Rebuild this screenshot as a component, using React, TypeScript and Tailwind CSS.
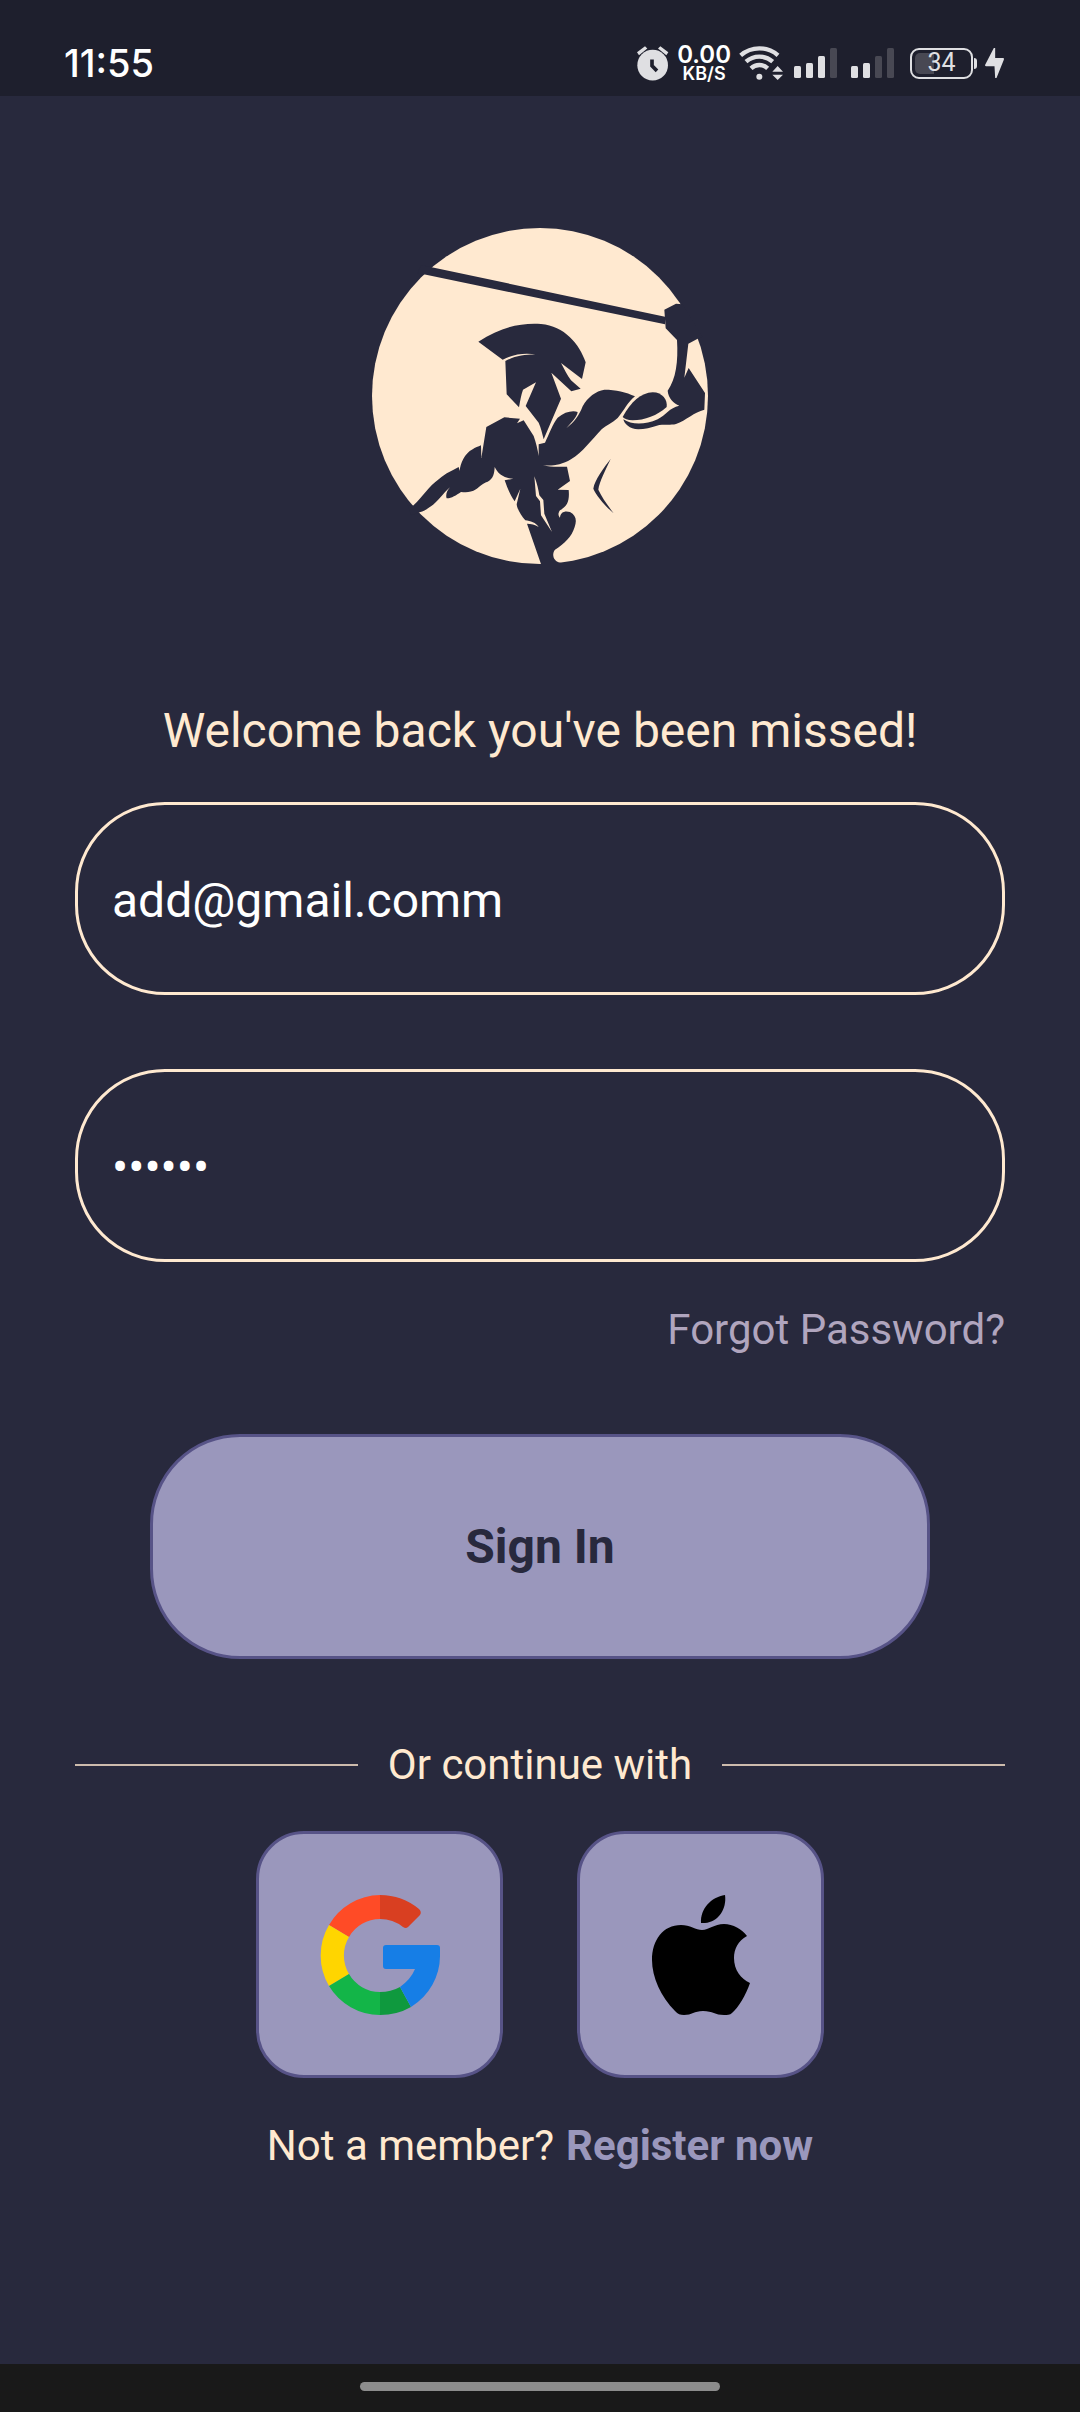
import React from "react";

function AlarmIcon() {
  return (
    <svg viewBox="0 0 96 104" className="h-[35px] w-[32px]" fill="#dfdfe2" aria-hidden="true">
      <path d="M0 18 24 0 31 7 6 27ZM94 18 70 0 63 7 88 27Z" />
      <circle cx="47" cy="57" r="46" />
      <path d="M45 40v19l15 15" fill="none" stroke="#1e1f2d" strokeWidth="11" />
    </svg>
  );
}

function WifiIcon() {
  return (
    <svg viewBox="0 0 132 102" className="h-[34px] w-[44px]" fill="none" stroke="#dfdfe2" strokeWidth="13" aria-hidden="true">
      <path d="M5 28A85 85 0 0 1 117 28" />
      <path d="M21 47A60 60 0 0 1 101 47" />
      <path d="M36 67A36 36 0 0 1 86 67" />
      <circle cx="61" cy="92" r="9" fill="#dfdfe2" stroke="none" />
      <path d="M116 60 132 77H100ZM116 102 132 86H100Z" fill="#dfdfe2" stroke="none" />
    </svg>
  );
}

function SignalIcon({ level }: { level: number }) {
  const bars = [
    { x: 0, h: 12 },
    { x: 12, h: 15 },
    { x: 24, h: 22 },
    { x: 36, h: 30 },
  ];
  return (
    <svg viewBox="0 0 43 30" className="h-[30px] w-[43px]" aria-hidden="true">
      {bars.map((bar, i) => (
        <rect key={bar.x} x={bar.x} y={30 - bar.h} width="7" height={bar.h} rx="1.5" fill={i < level ? "#dfdfe2" : "#484853"} />
      ))}
    </svg>
  );
}

function BatteryIcon() {
  return (
    <div className="flex items-center gap-px">
      <div className="flex h-[31px] w-[63px] rounded-[9px] border-2 border-[#dfdfe2] p-[3px]">
        <div className="relative flex h-full w-full items-center justify-center">
          <div className="absolute inset-y-0 left-0 w-[19px] rounded-l-[5px] bg-[#484853]" />
          <span className="relative text-[25px] leading-6 text-[#dfdfe2]">34</span>
        </div>
      </div>
      <div className="h-[11px] w-[3px] rounded-r-sm bg-[#dfdfe2]" />
    </div>
  );
}

function BoltIcon() {
  return (
    <svg viewBox="0 0 56 90" className="h-[30px] w-[19px]" fill="#dfdfe2" aria-hidden="true">
      <path d="M26 0 0 50c-1 3 0 5 3 5h25l2 35h4L56 35c1-3 0-5-3-5H30L30 0Z" />
    </svg>
  );
}

function StatusBar() {
  return (
    <header className="flex h-[96px] items-end justify-between bg-[#1e1f2d] pr-[76px] pb-[13px] pl-[64px]">
      <time className="font-['Inter'] text-[38px] leading-[40px] font-medium text-white">11:55</time>
      <div className="flex h-[40px] items-center">
        <AlarmIcon />
        <div className="ml-[8px] flex flex-col items-center pt-[2px] font-['Inter'] text-white">
          <span className="text-[24px] leading-[20px] font-semibold">0.00</span>
          <span className="text-[18px] leading-[18px] font-semibold">KB/S</span>
        </div>
        <div className="ml-[8px] flex items-center">
          <WifiIcon />
        </div>
        <div className="ml-[11px] flex gap-[14px]">
          <SignalIcon level={3} />
          <SignalIcon level={2} />
        </div>
        <div className="ml-[16px] flex items-center gap-[8px]">
          <BatteryIcon />
          <BoltIcon />
        </div>
      </div>
    </header>
  );
}

function WarriorLogo() {
  return (
    <svg viewBox="33 38 1008 1008" className="size-[336px]" fill="#28293d" role="img" aria-label="Warrior logo">
      <circle cx="537" cy="542" r="504" fill="#ffe9d0" />
      <path d="M180 149 912 304V327L170 173Z" />
      <path d="M910 283 945 265 965 267 1024 364 1010 370 982 385 970 487 983 458 1032 533 1030 583C1000 590 975 615 945 626 930 630 910 627 895 629 870 637 850 642 832 642 805 642 790 625 787 612 810 628 850 630 890 612 915 598 925 578 955 571 938 565 922 548 920 526 945 490 952 440 948 374L914 339Z" />
      <path d="M785 605C810 560 840 532 875 531 905 531 920 555 917 575 890 600 850 615 815 615 800 614 790 610 785 605Z" />
      <path d="M352 379C420 335 480 322 540 326 610 332 655 385 674 441L663 491 600 443C610 460 618 480 630 495L659 520 631 528 571 472 600 550 548 672C544 655 540 638 533 622L494 572 525 501 486 523C480 540 477 558 474 576L437 537 433 437C465 420 500 417 528 418 495 412 460 415 425 433Z" />
      <path d="M376 635 430 606 477 610 468 624 488 615 518 662C525 682 530 702 533 722V687L552 682C565 655 575 625 590 607 610 590 635 584 650 590 648 605 632 620 616 639 640 620 655 600 665 573 680 545 705 527 730 523 765 523 795 530 822 543 800 560 790 585 770 608 755 622 735 630 722 642 690 675 665 712 630 732 600 750 575 752 546 750 570 756 595 754 618 754L627 797 590 823 623 824C626 855 620 872 597 885 590 895 592 902 597 907 598 890 612 885 627 890 645 900 648 915 641 935 632 965 610 985 582 1003 572 1015 575 1038 600 1043L598 1052 542 1052 498 925C510 925 522 928 533 935 525 922 508 917 493 915 480 900 468 880 467 867L478 820 461 858C448 840 438 815 431 795L457 790C430 790 410 775 401 755 400 775 397 790 380 799 362 805 355 815 345 822 330 832 315 832 300 830 285 840 270 850 257 849 253 840 258 825 267 816 245 835 230 860 210 873 200 880 190 888 176 891L150 900 140 870 156 871C190 840 200 815 235 790 255 773 275 765 293 755L296 767C298 745 310 715 335 702 342 697 352 694 360 690L361 728Z" />
      <path d="M520 783C528 805 533 825 535 840L547 854 550 895 573 950 540 900 537 858 525 842Z" fill="#ffe9d0" />
      <path d="M749 731C733 765 715 800 712 823 722 845 740 870 758 894 735 875 705 840 697 820 700 795 730 755 749 731Z" />
    </svg>
  );
}

function GoogleIcon() {
  return (
    <svg viewBox="0 0 120 120" className="size-[120px]" aria-hidden="true">
      <path d="M60 0A60 60 0 0 0 9 30L29 42A36 36 0 0 1 60 24Z" fill="#ff4b26" />
      <path d="M60 0Q82 0 99 14Q102 17 100 20L88 32Q86 34 83 32Q73 24 60 24Z" fill="#d93f21" />
      <path d="M9 30A60 60 0 0 0 9 91L29 79A36 36 0 0 1 29 42Z" fill="#ffd500" />
      <path d="M9 91A60 60 0 0 0 60 120V97A36 36 0 0 1 29 79Z" fill="#13b548" />
      <path d="M60 120Q77 120 91 112L80 92Q71 97 60 97Z" fill="#0f993e" />
      <path d="M66 50H117Q120 50 120 53V60A60 60 0 0 1 91 112L80 92Q91 84 95 74H66Q63 74 63 71V53Q63 50 66 50Z" fill="#167ee6" />
    </svg>
  );
}

function AppleIcon() {
  return (
    <svg viewBox="0 0 98 120" className="h-[120px] w-[98px]" fill="#000" aria-hidden="true">
      <path d="M73 0C75 14 66 27 53 28H49C48 14 59 2 73 0Z" />
      <path d="M50 35C57 35 62 29 72 29 81 29 90 34 95 41 86 46 82 54 82 63 82 75 89 84 98 88 94 100 86 113 80 118 78 120 75 120 72 120 63 120 61 116 51 116 42 116 40 120 32 120 28 120 26 119 23 116 9 102 0 82 0 65 0 45 11 30 29 30 38 30 44 35 50 35Z" />
    </svg>
  );
}

function Field({ label, type, defaultValue }: { label: string; type: string; defaultValue: string }) {
  return (
    <input
      aria-label={label}
      type={type}
      defaultValue={defaultValue}
      className="h-[193px] w-full rounded-[90px] border-3 border-[#ffe9d0] bg-transparent px-[34px] pt-1 text-[48px] text-white outline-none"
    />
  );
}

function SocialButton({ label, children }: { label: string; children: React.ReactNode }) {
  return (
    <button
      type="button"
      aria-label={label}
      className="flex size-[247px] items-center justify-center rounded-[48px] border-3 border-[#575387] bg-[#9a97bc]"
    >
      {children}
    </button>
  );
}

export default function App() {
  return (
    <div className="flex min-h-screen flex-col bg-[#28293d] font-['Roboto',sans-serif]">
      <StatusBar />
      <main className="flex flex-1 flex-col items-center px-[75px] pt-[132px] pb-[80px] text-[#ffe9d0]">
        <WarriorLogo />
        <form className="flex w-full flex-col items-center" onSubmit={(e) => e.preventDefault()}>
          <h1 className="mt-[139px] mb-[43px] text-[48px] leading-[56px]">Welcome back you've been missed!</h1>
          <div className="flex w-full flex-col gap-[74px]">
            <Field label="Email" type="email" defaultValue="add@gmail.comm" />
            <Field label="Password" type="password" defaultValue="secret" />
          </div>
          <a href="#forgot" className="mt-[44px] self-end text-[42px] leading-[48px] text-[#b0a5be]">
            Forgot Password?
          </a>
          <div className="mt-[80px] w-full px-[75px]">
            <button
              type="submit"
              className="h-[225px] w-full rounded-[90px] border-3 border-[#575387] bg-[#9a97bc] text-[48px] font-bold text-[#28293d]"
            >
              Sign In
            </button>
          </div>
        </form>
        <div className="mt-[82px] flex w-full items-center gap-[30px]">
          <div className="h-[2px] flex-1 bg-[#cdbbad]" />
          <span className="text-[42px] leading-[48px]">Or continue with</span>
          <div className="h-[2px] flex-1 bg-[#cdbbad]" />
        </div>
        <div className="mt-[42px] flex gap-[74px]">
          <SocialButton label="Continue with Google">
            <GoogleIcon />
          </SocialButton>
          <SocialButton label="Continue with Apple">
            <AppleIcon />
          </SocialButton>
        </div>
        <p className="mt-[44px] flex gap-[12px] text-[42px] leading-[48px]">
          <span>Not a member?</span>
          <a href="#register" className="font-bold text-[#9a97bc]">
            Register now
          </a>
        </p>
      </main>
      <footer className="flex h-[48px] items-center justify-center bg-[#191919] pb-[3px]">
        <div className="h-[9px] w-1/3 rounded-full bg-[#8c8c8c]" />
      </footer>
    </div>
  );
}
